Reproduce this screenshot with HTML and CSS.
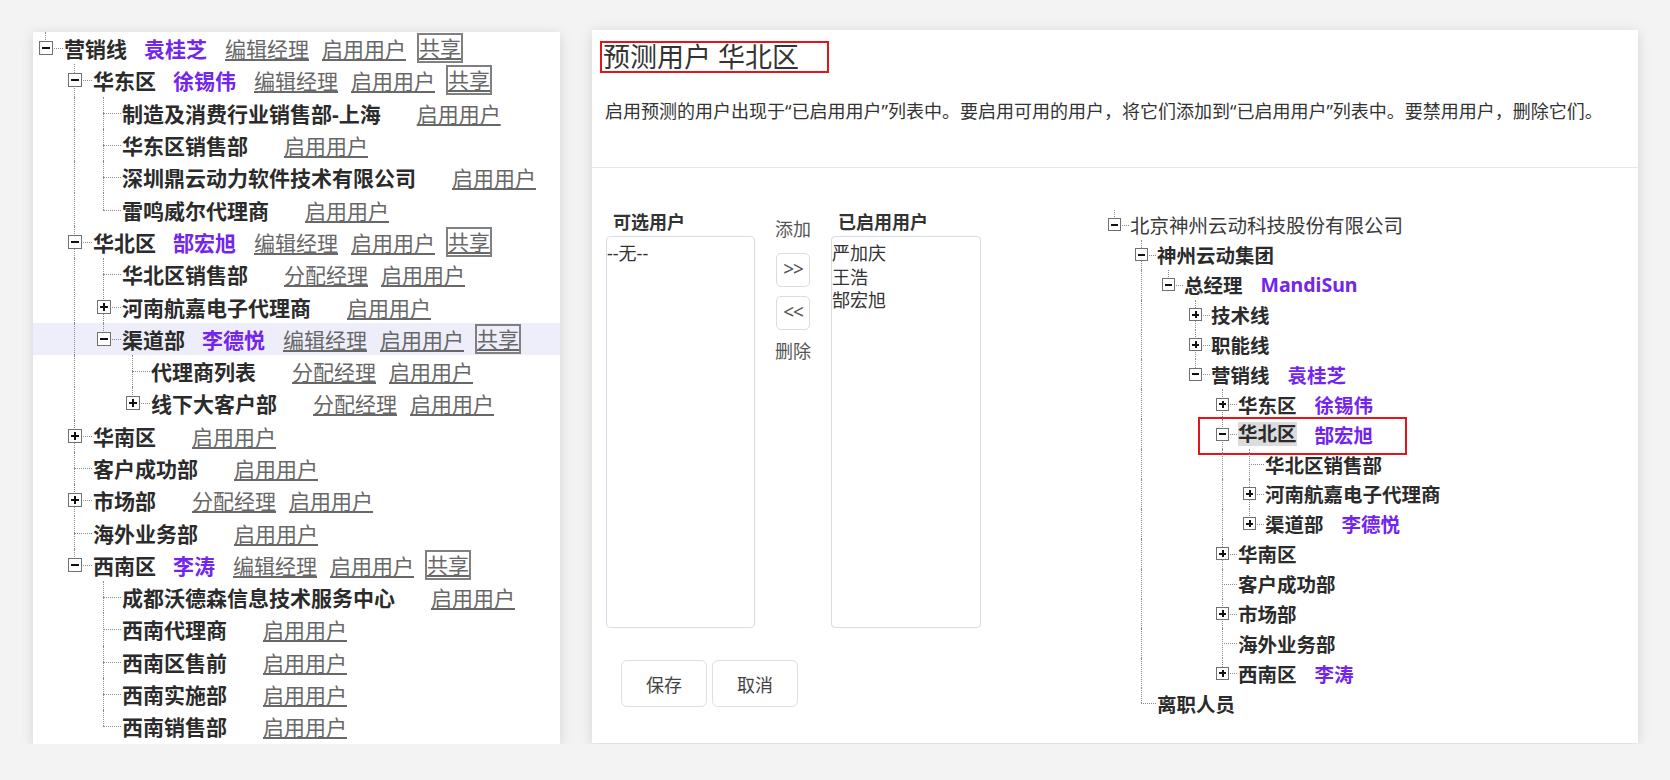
FILE: index.html
```html
<!DOCTYPE html>
<html>
<head>
    <meta charset="utf-8">
    <meta name="viewport" content="width=device-width, initial-scale=1.0">
    <link rel="stylesheet" href="styles.css">
</head>
<body>
    <div class="panel panel-left">
        <div class="tree tree-l">
            <div class="row"><span class="jn l"><i class="box"></i></span><b class="name">营销线</b><b class="mgr">袁桂芝</b><a class="lnk" href="#">编辑经理</a><a class="lnk" href="#">启用用户</a><a class="share" href="#">共享</a></div>
            <div class="row"><span class="ind"></span><span class="jn t"><i class="box"></i></span><b class="name">华东区</b><b class="mgr">徐锡伟</b><a class="lnk" href="#">编辑经理</a><a class="lnk" href="#">启用用户</a><a class="share" href="#">共享</a></div>
            <div class="row"><span class="ind"></span><span class="ind line"></span><span class="jn t"></span><b class="name">制造及消费行业销售部-上海</b><a class="lnk" href="#">启用用户</a></div>
            <div class="row"><span class="ind"></span><span class="ind line"></span><span class="jn t"></span><b class="name">华东区销售部</b><a class="lnk" href="#">启用用户</a></div>
            <div class="row"><span class="ind"></span><span class="ind line"></span><span class="jn t"></span><b class="name">深圳鼎云动力软件技术有限公司</b><a class="lnk" href="#">启用用户</a></div>
            <div class="row"><span class="ind"></span><span class="ind line"></span><span class="jn l"></span><b class="name">雷鸣威尔代理商</b><a class="lnk" href="#">启用用户</a></div>
            <div class="row"><span class="ind"></span><span class="jn t"><i class="box"></i></span><b class="name">华北区</b><b class="mgr">郜宏旭</b><a class="lnk" href="#">编辑经理</a><a class="lnk" href="#">启用用户</a><a class="share" href="#">共享</a></div>
            <div class="row"><span class="ind"></span><span class="ind line"></span><span class="jn t"></span><b class="name">华北区销售部</b><a class="lnk" href="#">分配经理</a><a class="lnk" href="#">启用用户</a></div>
            <div class="row"><span class="ind"></span><span class="ind line"></span><span class="jn t"><i class="box plus"></i></span><b class="name">河南航嘉电子代理商</b><a class="lnk" href="#">启用用户</a></div>
            <div class="row hover"><span class="ind"></span><span class="ind line"></span><span class="jn l"><i class="box"></i></span><b class="name">渠道部</b><b class="mgr">李德悦</b><a class="lnk" href="#">编辑经理</a><a class="lnk" href="#">启用用户</a><a class="share" href="#">共享</a></div>
            <div class="row"><span class="ind"></span><span class="ind line"></span><span class="ind"></span><span class="jn t"></span><b class="name">代理商列表</b><a class="lnk" href="#">分配经理</a><a class="lnk" href="#">启用用户</a></div>
            <div class="row"><span class="ind"></span><span class="ind line"></span><span class="ind"></span><span class="jn l"><i class="box plus"></i></span><b class="name">线下大客户部</b><a class="lnk" href="#">分配经理</a><a class="lnk" href="#">启用用户</a></div>
            <div class="row"><span class="ind"></span><span class="jn t"><i class="box plus"></i></span><b class="name">华南区</b><a class="lnk" href="#">启用用户</a></div>
            <div class="row"><span class="ind"></span><span class="jn t"></span><b class="name">客户成功部</b><a class="lnk" href="#">启用用户</a></div>
            <div class="row"><span class="ind"></span><span class="jn t"><i class="box plus"></i></span><b class="name">市场部</b><a class="lnk" href="#">分配经理</a><a class="lnk" href="#">启用用户</a></div>
            <div class="row"><span class="ind"></span><span class="jn t"></span><b class="name">海外业务部</b><a class="lnk" href="#">启用用户</a></div>
            <div class="row"><span class="ind"></span><span class="jn l"><i class="box"></i></span><b class="name">西南区</b><b class="mgr">李涛</b><a class="lnk" href="#">编辑经理</a><a class="lnk" href="#">启用用户</a><a class="share" href="#">共享</a></div>
            <div class="row"><span class="ind"></span><span class="ind"></span><span class="jn t"></span><b class="name">成都沃德森信息技术服务中心</b><a class="lnk" href="#">启用用户</a></div>
            <div class="row"><span class="ind"></span><span class="ind"></span><span class="jn t"></span><b class="name">西南代理商</b><a class="lnk" href="#">启用用户</a></div>
            <div class="row"><span class="ind"></span><span class="ind"></span><span class="jn t"></span><b class="name">西南区售前</b><a class="lnk" href="#">启用用户</a></div>
            <div class="row"><span class="ind"></span><span class="ind"></span><span class="jn t"></span><b class="name">西南实施部</b><a class="lnk" href="#">启用用户</a></div>
            <div class="row"><span class="ind"></span><span class="ind"></span><span class="jn l"></span><b class="name">西南销售部</b><a class="lnk" href="#">启用用户</a></div>
        </div>
    </div>

    <div class="panel panel-right">
        <div class="head">
            <div class="title">预测用户 华北区</div>
            <div class="desc">启用预测的用户出现于“已启用用户”列表中。要启用可用的用户，将它们添加到“已启用用户”列表中。要禁用用户，删除它们。</div>
        </div>
        <div class="body">
            <div class="transfer">
                <div class="lists">
                    <div class="col">
                        <div class="col-title">可选用户</div>
                        <div class="listbox">
                            <div>--无--</div>
                        </div>
                    </div>
                    <div class="mid">
                        <div class="mid-label">添加</div>
                        <button class="move">&gt;&gt;</button>
                        <button class="move move-back">&lt;&lt;</button>
                        <div class="mid-label del">删除</div>
                    </div>
                    <div class="col col-wide">
                        <div class="col-title">已启用用户</div>
                        <div class="listbox">
                            <div>严加庆</div>
                            <div>王浩</div>
                            <div>郜宏旭</div>
                        </div>
                    </div>
                </div>
                <div class="actions">
                    <button class="btn">保存</button>
                    <button class="btn">取消</button>
                </div>
            </div>

            <div class="tree tree-r">
                <div class="row"><span class="jn l"><i class="box"></i></span><span class="name plain">北京神州云动科技股份有限公司</span></div>
                <div class="row"><span class="ind"></span><span class="jn t"><i class="box"></i></span><b class="name">神州云动集团</b></div>
                <div class="row"><span class="ind"></span><span class="ind line"></span><span class="jn l"><i class="box"></i></span><b class="name">总经理</b><b class="mgr">MandiSun</b></div>
                <div class="row"><span class="ind"></span><span class="ind line"></span><span class="ind"></span><span class="jn t"><i class="box plus"></i></span><b class="name">技术线</b></div>
                <div class="row"><span class="ind"></span><span class="ind line"></span><span class="ind"></span><span class="jn t"><i class="box plus"></i></span><b class="name">职能线</b></div>
                <div class="row"><span class="ind"></span><span class="ind line"></span><span class="ind"></span><span class="jn l"><i class="box"></i></span><b class="name">营销线</b><b class="mgr">袁桂芝</b></div>
                <div class="row"><span class="ind"></span><span class="ind line"></span><span class="ind"></span><span class="ind"></span><span class="jn t"><i class="box plus"></i></span><b class="name">华东区</b><b class="mgr">徐锡伟</b></div>
                <div class="row"><span class="ind"></span><span class="ind line"></span><span class="ind"></span><span class="ind"></span><span class="jn t"><i class="box"></i></span><b class="name sel">华北区</b><b class="mgr">郜宏旭</b><span class="mark"></span></div>
                <div class="row"><span class="ind"></span><span class="ind line"></span><span class="ind"></span><span class="ind"></span><span class="ind line"></span><span class="jn t"></span><b class="name">华北区销售部</b></div>
                <div class="row"><span class="ind"></span><span class="ind line"></span><span class="ind"></span><span class="ind"></span><span class="ind line"></span><span class="jn t"><i class="box plus"></i></span><b class="name">河南航嘉电子代理商</b></div>
                <div class="row"><span class="ind"></span><span class="ind line"></span><span class="ind"></span><span class="ind"></span><span class="ind line"></span><span class="jn l"><i class="box plus"></i></span><b class="name">渠道部</b><b class="mgr">李德悦</b></div>
                <div class="row"><span class="ind"></span><span class="ind line"></span><span class="ind"></span><span class="ind"></span><span class="jn t"><i class="box plus"></i></span><b class="name">华南区</b></div>
                <div class="row"><span class="ind"></span><span class="ind line"></span><span class="ind"></span><span class="ind"></span><span class="jn t"></span><b class="name">客户成功部</b></div>
                <div class="row"><span class="ind"></span><span class="ind line"></span><span class="ind"></span><span class="ind"></span><span class="jn t"><i class="box plus"></i></span><b class="name">市场部</b></div>
                <div class="row"><span class="ind"></span><span class="ind line"></span><span class="ind"></span><span class="ind"></span><span class="jn t"></span><b class="name">海外业务部</b></div>
                <div class="row"><span class="ind"></span><span class="ind line"></span><span class="ind"></span><span class="ind"></span><span class="jn l"><i class="box plus"></i></span><b class="name">西南区</b><b class="mgr">李涛</b></div>
                <div class="row"><span class="ind"></span><span class="jn l"></span><b class="name">离职人员</b></div>
            </div>
        </div>
    </div>
</body>
</html>
```

FILE: styles.css
```css
body {
    margin: 0;
    padding: 30px 0 0 33px;
    background-color: #f3f3f3;
    font-family: "Noto Sans", "Noto Sans CJK SC", sans-serif;
    color: #333;
    display: flex;
    align-items: flex-start;
    gap: 32px;
}

.panel {
    background-color: #fff;
    box-shadow: 0 2px 12px rgba(0, 0, 0, 0.13);
    box-sizing: border-box;
}

.panel-left {
    width: 527px;
    height: 712px;
    margin-top: 2px;
}

.panel-right {
    width: 1046px;
    height: 713px;
}

/* tree */
.tree .row {
    display: flex;
    align-items: center;
    white-space: nowrap;
    position: relative;
}

.tree-l {
    --w: 29px;
    --cx: 10px;
    --bx: 14px;
    font-size: 21px;
}

.tree-l .row {
    height: 32.3px;
    padding-left: 2px;
}

.tree-l .row.hover {
    background-color: #eeeefa;
}

.tree-r {
    --w: 27px;
    --cx: 11px;
    --bx: 13px;
    font-size: 19.5px;
    margin-left: 122px;
}

.tree-r .row {
    height: 29.9px;
}

.ind, .jn {
    flex: none;
    align-self: stretch;
    width: var(--w);
    position: relative;
}

.ind.line::before, .jn::before {
    content: "";
    position: absolute;
    left: var(--cx);
    top: 0;
    bottom: 0;
    border-left: 1px dotted #8c8c8c;
}

.jn.l::before {
    bottom: 50%;
}

.jn::after {
    content: "";
    position: absolute;
    left: var(--cx);
    right: 1px;
    top: 50%;
    border-top: 1px dotted #8c8c8c;
}

.box {
    position: absolute;
    z-index: 1;
    left: calc(var(--cx) + 0.5px - var(--bx) / 2);
    top: calc(50% - var(--bx) / 2);
    width: var(--bx);
    height: var(--bx);
    box-sizing: border-box;
    border: 1px solid #707070;
    background-color: #fff;
}

.box::before {
    content: "";
    position: absolute;
    left: 2px;
    right: 2px;
    top: calc(50% - 1px);
    height: 2px;
    background-color: #111;
}

.box.plus::after {
    content: "";
    position: absolute;
    top: 2px;
    bottom: 2px;
    left: calc(50% - 1px);
    width: 2px;
    background-color: #111;
}

.name {
    color: #2b2b2b;
    font-weight: bold;
}

.name.plain {
    font-weight: normal;
    color: #3a3a3a;
}

.name.sel {
    background-color: #dcdcdc;
    line-height: 24px;
}

.mgr {
    color: #7325ee;
    font-weight: bold;
    margin-left: 17px;
}

.tree-r .mgr {
    margin-left: 18px;
}

.lnk, .share {
    color: #686868;
    text-decoration: underline;
}

.name + .lnk {
    margin-left: 36px;
}

.mgr + .lnk {
    margin-left: 18px;
}

.lnk + .lnk {
    margin-left: 13px;
}

.lnk + .share {
    margin-left: 11px;
}

.share {
    border: 2px solid #808080;
    line-height: 26px;
}

.mark {
    position: absolute;
    left: 95px;
    top: -2px;
    width: 209px;
    height: 38px;
    box-sizing: border-box;
    border: 2px solid #e5141b;
}

/* right side */
.head {
    display: flex;
    flex-direction: column;
    align-items: flex-start;
    padding: 11px 0 44px 8px;
    border-bottom: 1px solid #e8e8e8;
}

.title {
    border: 2px solid #e5141b;
    padding: 0 28px 0 1px;
    font-size: 27px;
    line-height: 28px;
    color: #333;
}

.desc {
    margin: 26px 0 0 5px;
    font-size: 18px;
    line-height: 24px;
    color: #333;
}

.body {
    display: flex;
    padding-top: 42px;
}

.transfer {
    margin-left: 14px;
}

.lists {
    display: flex;
    gap: 20px;
}

.col {
    width: 149px;
}

.col-wide {
    width: 150px;
}

.col-title {
    font-size: 18px;
    font-weight: bold;
    line-height: 24px;
    padding-left: 7px;
}

.listbox {
    margin-top: 2px;
    height: 392px;
    border: 1px solid #d9dce8;
    border-radius: 4px;
    box-sizing: border-box;
    padding-top: 5px;
    font-size: 18px;
    line-height: 23.5px;
    color: #333;
}

.mid {
    width: 36px;
    display: flex;
    flex-direction: column;
    align-items: center;
    padding-top: 7px;
}

.mid-label {
    font-size: 18px;
    line-height: 24px;
    color: #555;
}

.mid-label.del {
    margin-top: 9px;
}

.move {
    width: 34px;
    height: 34px;
    margin-top: 12px;
    padding: 0 0 2px 0;
    border: 1px solid #dcdcdc;
    border-radius: 5px;
    background-color: #fff;
    font-family: "Noto Sans", sans-serif;
    font-size: 19px;
    letter-spacing: -1px;
    color: #555;
}

.move-back {
    margin-top: 9px;
}

.actions {
    display: flex;
    gap: 5px;
    margin: 32px 0 0 15px;
}

.btn {
    width: 86px;
    height: 47px;
    border: 1px solid #dcdfea;
    border-radius: 6px;
    background-color: #fff;
    font-family: "Noto Sans", "Noto Sans CJK SC", sans-serif;
    font-size: 18px;
    color: #444;
}
```
